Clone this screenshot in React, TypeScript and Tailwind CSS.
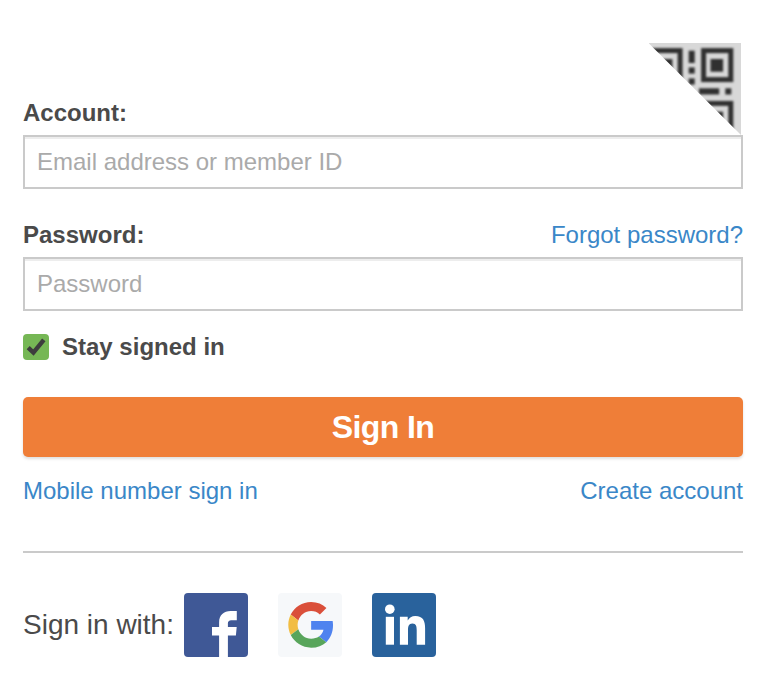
import React from "react";

function QrCorner() {
  return (
    <svg width="92" height="92" viewBox="0 0 92 92" className="mr-0.5 block" aria-label="QR code sign in">
      <defs>
        <clipPath id="corner">
          <path d="M-0.5 0H92V92Z" />
        </clipPath>
        <filter id="soft" x="0" y="0" width="92" height="92" filterUnits="userSpaceOnUse" colorInterpolationFilters="sRGB">
          <feGaussianBlur stdDeviation="0.9" />
        </filter>
      </defs>
      <g clipPath="url(#corner)">
        <rect width="92" height="92" fill="#d8d8d8" />
        <g filter="url(#soft)" fill="#303030">
          <rect x="2.5" y="7.6" width="28.6" height="29" fill="none" stroke="#303030" strokeWidth="5" />
          <rect x="11" y="16" width="12.4" height="12.7" />
          <rect x="54.6" y="7.6" width="27.2" height="29" fill="none" stroke="#303030" strokeWidth="5" />
          <rect x="61.5" y="16" width="12.6" height="12.7" />
          <rect x="39.7" y="7.7" width="6" height="12.3" />
          <rect x="39.7" y="24.4" width="6" height="6.2" />
          <rect x="39.7" y="35.4" width="6" height="6.2" />
          <rect x="50" y="45.3" width="20.2" height="6.2" />
          <rect x="76.3" y="45.3" width="6" height="6.2" />
          <rect x="54.6" y="60.4" width="27.2" height="29" fill="none" stroke="#303030" strokeWidth="5" />
          <rect x="61.5" y="68.7" width="12.6" height="12.7" />
        </g>
      </g>
    </svg>
  );
}

function FacebookIcon() {
  return (
    <svg width="64" height="64" viewBox="0 0 64 64">
      <rect width="64" height="64" rx="4" fill="#3f5896" />
      <path
        d="M35.1 64V42.5H28V34h7.1v-4.6C35.1 22 39.8 18 46.6 18h6.2v9.2h-4.7c-3.4 0-4.2 1.3-4.2 3.5V34h8.8l-.8 8.5h-8V64Z"
        fill="#fff"
      />
    </svg>
  );
}

function GoogleIcon() {
  return (
    <svg width="64" height="64" viewBox="0 0 64 64">
      <rect width="64" height="64" rx="4" fill="#f6f8fa" />
      <g transform="translate(10.3 9) scale(0.952)">
        <path fill="#da4f3a" d="M24 9.5c3.54 0 6.71 1.22 9.21 3.6l6.85-6.85C35.9 2.38 30.47 0 24 0 14.62 0 6.51 5.38 2.56 13.22l7.98 6.19C12.43 13.72 17.74 9.5 24 9.5z" />
        <path fill="#4f83ef" d="M46.98 24.55c0-1.57-.15-3.09-.38-4.55H24v9.02h12.94c-.58 2.96-2.26 5.48-4.78 7.18l7.73 6c4.51-4.18 7.09-10.36 7.09-17.65z" />
        <path fill="#f2bd42" d="M10.53 28.59c-.48-1.45-.76-2.99-.76-4.59s.27-3.14.76-4.59l-7.98-6.19C.92 16.46 0 20.12 0 24c0 3.88.92 7.54 2.56 10.78l7.97-6.19z" />
        <path fill="#58a55b" d="M24 48c6.48 0 11.93-2.13 15.89-5.81l-7.73-6c-2.15 1.45-4.92 2.3-8.16 2.3-6.26 0-11.57-4.22-13.47-9.91l-7.98 6.19C6.51 42.62 14.62 48 24 48z" />
      </g>
    </svg>
  );
}

function LinkedInIcon() {
  return (
    <svg width="64" height="64" viewBox="0 0 64 64">
      <rect width="64" height="64" rx="4" fill="#29629c" />
      <g fill="#fff">
        <circle cx="17.8" cy="16.2" r="4.8" />
        <rect x="13.8" y="23.8" width="8.2" height="27.9" />
        <path d="M27.9 23.8h7.8v3.7c1.4-2.5 4.1-4.4 7.6-4.4 7.8 0 9.8 4.9 9.8 12.2v16.4h-8.4V37.3c0-3.7-.4-6.9-4.3-6.9-3.8 0-4.4 3.1-4.4 6.8v14.5h-8.1Z" />
      </g>
    </svg>
  );
}

const inputClass =
  "block h-[54px] w-full appearance-none rounded-none border-2 border-[#cacaca] bg-white px-3 text-2xl text-[#444] shadow-[inset_0_2px_0_#ededed] outline-none placeholder:text-[#aaaaaa]";

export default function App() {
  return (
    <main className="h-[695px] w-[757px] bg-white pt-[43px] pr-[14px] pl-[23px] font-['Liberation_Sans',Arial,sans-serif] text-2xl text-[#4a4a4a]">
      <form onSubmit={(e) => e.preventDefault()}>
        <div className="flex h-[92px] items-end justify-between">
          <label htmlFor="account" className="pb-1 leading-9 font-bold">Account:</label>
          <QrCorner />
        </div>
        <input id="account" className={inputClass} placeholder="Email address or member ID" />

        <div className="mt-7 flex h-10 items-start justify-between leading-9">
          <label htmlFor="password" className="font-bold">Password:</label>
          <a href="#" className="text-[#3a87c8]">Forgot password?</a>
        </div>
        <input id="password" type="password" className={inputClass} placeholder="Password" />

        <label className="mt-[18px] flex h-9 items-center gap-[13px] font-bold">
          <span className="flex size-[26px] items-center justify-center rounded-[4px] bg-[#76b755]">
            <svg width="26" height="26" viewBox="0 0 26 26">
              <path d="M5.2 13.6 10.4 18.6 20.8 5.8" fill="none" stroke="#3d3d3d" strokeWidth="4.4" />
            </svg>
          </span>
          Stay signed in
        </label>

        <button className="mt-8 flex h-[60px] w-full items-center justify-center rounded-[5px] bg-[#ef7e38] text-[32px] leading-none font-bold tracking-[-0.6px] text-white shadow-[0_2px_3px_rgba(0,0,0,0.13)]">
          Sign In
        </button>
      </form>

      <nav className="mt-4 flex justify-between leading-9 text-[#3a87c8]">
        <a href="#">Mobile number sign in</a>
        <a href="#">Create account</a>
      </nav>

      <hr className="mt-[42px] border-t-2 border-[#cacaca]" />

      <section className="mt-10 flex h-16 items-center text-[28px]">
        <span className="w-[161px] whitespace-nowrap">Sign in with:</span>
        <div className="flex gap-[30px]">
          <a href="#" aria-label="Facebook"><FacebookIcon /></a>
          <a href="#" aria-label="Google"><GoogleIcon /></a>
          <a href="#" aria-label="LinkedIn"><LinkedInIcon /></a>
        </div>
      </section>
    </main>
  );
}
